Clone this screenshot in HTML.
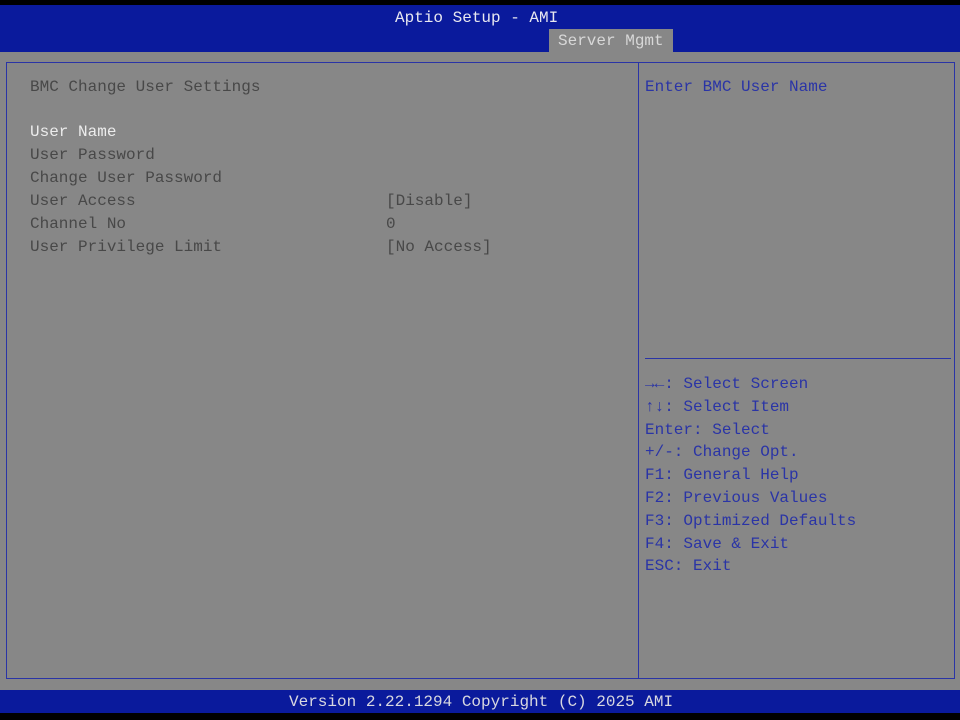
<!DOCTYPE html>
<html><head><style>
body{margin:0;width:960px;height:720px;background:#878787;position:relative;overflow:hidden;font-family:"Liberation Mono",monospace;font-size:16px;}
.a{position:absolute;white-space:pre;line-height:20px;}
.d{color:#484848}
.b{color:#2a34a6}
</style></head><body>
<div style="position:absolute;left:0;top:0;width:960px;height:5px;background:#000"></div>
<div style="position:absolute;left:0;top:5px;width:960px;height:47px;background:#0a1a9c"></div>
<div class="a" style="left:395px;top:8px;color:#e8e8f0">Aptio Setup - AMI</div>
<div style="position:absolute;left:549px;top:29px;width:124px;height:23px;background:#878787"></div>
<div class="a" style="left:558px;top:31px;color:#d8d8d8">Server Mgmt</div>
<div style="position:absolute;left:6px;top:62px;width:947px;height:615px;border:1px solid #2a34a6"></div>
<div style="position:absolute;left:638px;top:62px;width:1px;height:617px;background:#2a34a6"></div>
<div style="position:absolute;left:645px;top:358px;width:306px;height:1px;background:#2a34a6"></div>
<div class="a d" style="left:30px;top:77px">BMC Change User Settings</div>
<div class="a" style="left:30px;top:122px;color:#ececec">User Name</div>
<div class="a d" style="left:30px;top:145px">User Password</div>
<div class="a d" style="left:30px;top:168px">Change User Password</div>
<div class="a d" style="left:30px;top:191px">User Access</div>
<div class="a d" style="left:30px;top:214px">Channel No</div>
<div class="a d" style="left:30px;top:237px">User Privilege Limit</div>
<div class="a d" style="left:386px;top:191px">[Disable]</div>
<div class="a d" style="left:386px;top:214px">0</div>
<div class="a d" style="left:386px;top:237px">[No Access]</div>
<div class="a b" style="left:645px;top:77px">Enter BMC User Name</div>
<div class="a b" style="left:645px;top:373px">→←: Select Screen
↑↓: Select Item
Enter: Select
+/-: Change Opt.
F1: General Help
F2: Previous Values
F3: Optimized Defaults
F4: Save &amp; Exit
ESC: Exit</div>
<style>.a.b[style*="373"]{line-height:22.8px}</style>
<div style="position:absolute;left:0;top:690px;width:960px;height:23px;background:#0a1a9c"></div>
<div style="position:absolute;left:0;top:713px;width:960px;height:7px;background:#000"></div>
<div class="a" style="left:289px;top:692px;color:#d8d8e0">Version 2.22.1294 Copyright (C) 2025 AMI</div>
</body></html>
